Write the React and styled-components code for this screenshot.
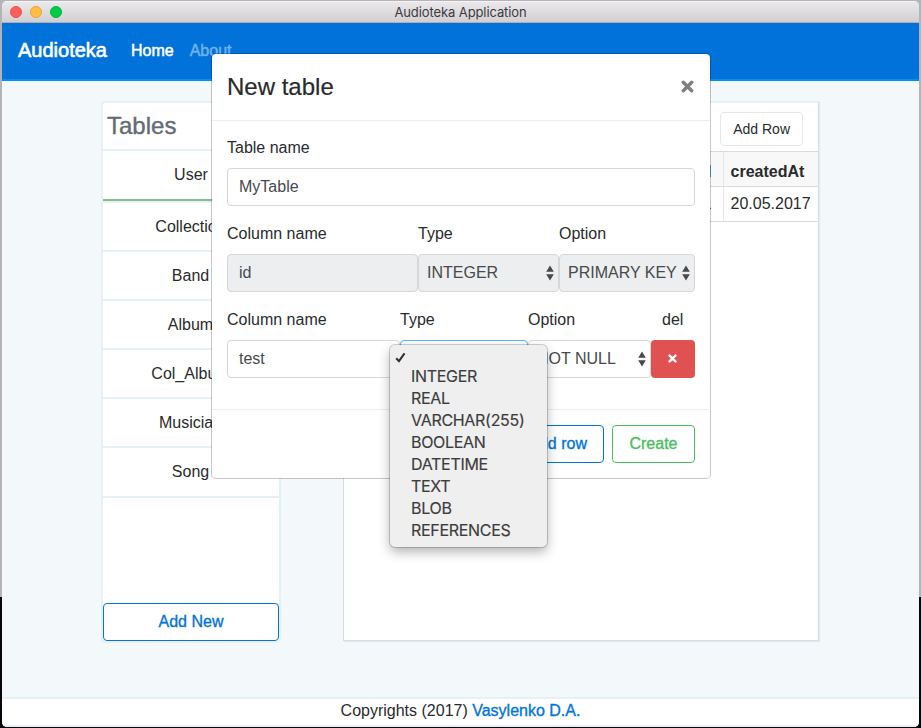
import React from "react";
import styled, { createGlobalStyle, css } from "styled-components";

const Global = createGlobalStyle`
  *, *::before, *::after { box-sizing: border-box; }
  html, body { margin: 0; padding: 0; overflow: hidden; }
  body {
    font-family: "Liberation Sans", Arial, sans-serif;
    font-size: 16px;
    line-height: 24px;
    color: #292b2c;
  }
  button { font: inherit; cursor: pointer; }
`;

const Desktop = styled.div`
  width: 921px;
  height: 728px;
  padding: 1px 2px;
  background: linear-gradient(#b4b4b6 0 597px, #08060c 597px);
`;

const Window = styled.div`
  position: relative;
  display: flex;
  flex-direction: column;
  width: 917px;
  height: 726px;
  border-radius: 5px;
  overflow: hidden;
  background: #f3f8fb;
`;

const TitleBar = styled.header`
  display: grid;
  grid-template-columns: 1fr auto 1fr;
  align-items: center;
  height: 22px;
  padding: 0 8px;
  background: linear-gradient(#ebe8eb, #d2cfd2);
  border-top: 1px solid #f5f3f5;
  border-bottom: 1px solid #b3aeb1;
`;

const Lights = styled.div`
  display: flex;
  gap: 8px;
`;

const Light = styled.span`
  width: 12px;
  height: 12px;
  border-radius: 50%;
  background: ${(p) => p.$fill};
  border: 1px solid ${(p) => p.$edge};
`;

const WindowTitle = styled.div`
  font: 13px/20px Inter, sans-serif;
  letter-spacing: -0.1px;
  color: #3c3a3c;
`;

const Navbar = styled.nav`
  display: flex;
  align-items: center;
  height: 58px;
  padding: 0 16px 2px;
  background: #0072d9;
  border-bottom: 2px solid #0090f8;
`;

const Brand = styled.a`
  margin-right: 24px;
  font-size: 20px;
  color: #fff;
  -webkit-text-stroke: 0.6px #fff;
`;

const NavLink = styled.a`
  margin-right: 16px;
  padding-top: 2px;
  color: ${(p) => (p.$active ? "#fff" : "#72b2ea")};
  -webkit-text-stroke: 0.5px currentColor;
`;

const Main = styled.main`
  display: flex;
  flex: 1;
  align-items: flex-start;
  gap: 62px;
  padding: 20px 0 0 99px;
`;

const Sidebar = styled.aside`
  display: flex;
  flex-direction: column;
  width: 180px;
  height: 542px;
  background: #fff;
  border: 2px solid #e5f1f4;
  border-radius: 4px;
`;

const SidebarTitle = styled.h2`
  height: 48px;
  margin: 0;
  padding: 0 4px;
  font-size: 24px;
  line-height: 46px;
  font-weight: 400;
  color: #636c76;
  -webkit-text-stroke: 0.4px currentColor;
  border-bottom: 2px solid #e5f1f4;
`;

const TableList = styled.ul`
  flex: 1;
  margin: 0;
  padding: 0;
  list-style: none;
`;

const TableItem = styled.li`
  height: ${(p) => (p.$active ? 52 : 49)}px;
  padding-right: 1px;
  line-height: 47px;
  text-align: center;
  border-bottom: 2px solid #e5f1f4;
  &:last-child {
    height: 50px;
  }
  ${(p) =>
    p.$active &&
    css`
      padding-right: 0;
      &::after {
        content: "";
        display: block;
        height: 2px;
        margin-top: 1px;
        background: #86bd8c;
      }
    `}
`;

const Button = styled.button`
  height: ${(p) => (p.$small ? 34 : 38)}px;
  padding: 0 ${(p) => (p.$small ? 12 : 16)}px;
  color: ${(p) => p.$tone};
  background: #fff;
  border: 1px solid ${(p) => p.$edge || p.$tone};
  border-radius: 4px;
  font-size: ${(p) => (p.$small ? 14 : 16)}px;
  -webkit-text-stroke: ${(p) => (p.$small ? 0 : 0.35)}px currentColor;
`;

const CreateButton = styled(Button)`
  width: 83px;
`;

const DataPanel = styled.section`
  width: 476px;
  height: 540px;
  background: #fff;
  border: 1px solid #d9dcde;
  border-top: 2px solid #e5f1f4;
  box-shadow: 1px 1px 1px #e0ebef;
  overflow: hidden;
`;

const DataToolbar = styled.div`
  display: flex;
  justify-content: flex-end;
  height: 48px;
  padding: 9px 15px 0;
`;

const DataTable = styled.table`
  width: 100%;
  border-collapse: collapse;
  table-layout: fixed;
`;

const Cell = styled.td`
  width: ${(p) => p.$width || "auto"};
  height: 35px;
  padding: 0 ${(p) => (p.$align === "right" ? 11 : 7)}px;
  text-align: ${(p) => p.$align || "left"};
  border-top: 1px solid #d9dadb;
  border-bottom: 1px solid #d9dadb;
  border-left: 1px solid #e3e5e6;
  ${(p) => p.$head && "padding-top: 5px; font-weight: 700; background: #f8f8f8;"}
`;

const Footer = styled.footer`
  height: 30px;
  text-align: center;
  background: #fff;
  border-top: 2px solid #e5f1f4;
  border-bottom: 2px solid #e5f1f4;
`;

const FooterLink = styled.a`
  color: #0275d8;
  -webkit-text-stroke: 0.35px currentColor;
`;

const Modal = styled.div`
  position: absolute;
  left: 209px;
  top: 52px;
  width: 500px;
  height: 426px;
  background: #fff;
  background-clip: padding-box;
  border: 1px solid rgba(0, 0, 0, 0.22);
  border-radius: 5px;
`;

const ModalHeader = styled.header`
  display: flex;
  justify-content: space-between;
  align-items: center;
  height: 67px;
  padding: 0 15px;
  border-bottom: 1px solid #eceeef;
`;

const ModalTitle = styled.h4`
  margin: 0;
  font-size: 24px;
  font-weight: 400;
  -webkit-text-stroke: 0.2px currentColor;
`;

const CloseButton = styled.button`
  display: flex;
  padding: 0 0 2px;
  margin-right: 1px;
  color: #808080;
  background: none;
  border: 0;
`;

const ModalBody = styled.div`
  height: 289px;
  padding: 15px;
  border-bottom: 1px solid #eceeef;
`;

const ModalFooter = styled.footer`
  display: flex;
  justify-content: flex-end;
  gap: 8px;
  padding: 15px;
`;

const FormRow = styled.div`
  display: grid;
  grid-template-columns: ${(p) => p.$columns};
  height: 86px;
`;

const Field = styled.div`
  min-width: 0;
`;

const Label = styled.label`
  display: block;
  height: 32px;
  padding-left: ${(p) => p.$inset || 0}px;
`;

const Control = styled.div`
  display: flex;
  align-items: center;
  justify-content: space-between;
  height: 38px;
  padding: 0 ${(p) => (p.$select ? "4px 1px 8px" : "11px 1px")};
  white-space: nowrap;
  color: #464a4c;
  background: ${(p) => (p.$disabled ? "#eceeef" : "#fff")};
  border: 1px solid ${(p) => (p.$focus ? "#5cb3fd" : "#d6d7d8")};
  border-radius: 4px;
`;

const DeleteButton = styled.button`
  display: flex;
  align-items: center;
  justify-content: center;
  width: 44px;
  height: 38px;
  padding: 0 1px 2px 0;
  color: #fff;
  background: #e05252;
  border: 0;
  border-radius: 4px;
`;

const Menu = styled.ul`
  position: absolute;
  left: 388px;
  top: 344px;
  width: 157px;
  height: 202px;
  margin: 0;
  padding: 2px 0 0;
  list-style: none;
  background: #efefef;
  border-radius: 5px;
  box-shadow: 0 0 0 1px rgba(0, 0, 0, 0.18), 0 5px 12px rgba(0, 0, 0, 0.3);
`;

const MenuItem = styled.li`
  display: flex;
  align-items: center;
  height: ${(p) => (p.$blank ? 18 : 22)}px;
  padding: ${(p) => (p.$blank ? "2px 0 0 5px" : "0 0 0 21px")};
  font: 16px/22px Inter, sans-serif;
  letter-spacing: -0.3px;
  color: #3c3c3c;
  -webkit-text-stroke: 0.15px currentColor;
`;

const Cross = ({ size }) => (
  <svg width={size} height={size} viewBox="0 0 12 12" aria-hidden="true">
    <path
      d="M2.1 2.1 9.9 9.9M9.9 2.1 2.1 9.9"
      stroke="currentColor"
      strokeWidth="3.2"
      strokeLinecap="round"
      fill="none"
    />
  </svg>
);

const Stepper = () => (
  <svg width="8" height="16" viewBox="0 0 8 16" aria-hidden="true">
    <path d="M4 .6 7.8 6.8H.2ZM4 15.4.2 9.2H7.8Z" fill="#464a4c" />
  </svg>
);

const Check = () => (
  <svg width="11" height="11" viewBox="0 0 11 11" aria-hidden="true">
    <path d="M1.2 6.2 4 9.2 9.5 1.4" stroke="#303030" strokeWidth="2" fill="none" />
  </svg>
);

const tables = ["User", "Collection", "Band", "Album", "Col_Album", "Musician", "Song"];
const types = ["INTEGER", "REAL", "VARCHAR(255)", "BOOLEAN", "DATETIME", "TEXT", "BLOB", "REFERENCES"];

function SelectBox({ children, ...rest }) {
  return (
    <Control $select {...rest}>
      <span>{children}</span>
      <Stepper />
    </Control>
  );
}

function NewTableModal() {
  return (
    <Modal role="dialog">
      <ModalHeader>
        <ModalTitle>New table</ModalTitle>
        <CloseButton aria-label="Close"><Cross size={13} /></CloseButton>
      </ModalHeader>
      <ModalBody>
        <FormRow $columns="1fr">
          <Field>
            <Label>Table name</Label>
            <Control>MyTable</Control>
          </Field>
        </FormRow>
        <FormRow $columns="191px 141px 136px">
          <Field>
            <Label>Column name</Label>
            <Control $disabled>id</Control>
          </Field>
          <Field>
            <Label>Type</Label>
            <SelectBox $disabled>INTEGER</SelectBox>
          </Field>
          <Field>
            <Label>Option</Label>
            <SelectBox $disabled>PRIMARY KEY</SelectBox>
          </Field>
        </FormRow>
        <FormRow $columns="173px 128px 123px 44px">
          <Field>
            <Label>Column name</Label>
            <Control>test</Control>
          </Field>
          <Field>
            <Label>Type</Label>
            <SelectBox $focus />
          </Field>
          <Field>
            <Label>Option</Label>
            <SelectBox>NOT NULL</SelectBox>
          </Field>
          <Field>
            <Label $inset={11}>del</Label>
            <DeleteButton aria-label="Delete"><Cross size={9} /></DeleteButton>
          </Field>
        </FormRow>
      </ModalBody>
      <ModalFooter>
        <Button $tone="#0275d8">Add row</Button>
        <CreateButton $tone="#4dbd62">Create</CreateButton>
      </ModalFooter>
    </Modal>
  );
}

export default function App() {
  return (
    <Desktop>
      <Global />
      <Window>
        <TitleBar>
          <Lights>
            <Light $fill="#ff5e5b" $edge="#e4504d" />
            <Light $fill="#ffbe41" $edge="#e2a63a" />
            <Light $fill="#00cc45" $edge="#08b140" />
          </Lights>
          <WindowTitle>Audioteka Application</WindowTitle>
        </TitleBar>
        <Navbar>
          <Brand>Audioteka</Brand>
          <NavLink $active>Home</NavLink>
          <NavLink>About</NavLink>
        </Navbar>
        <Main>
          <Sidebar>
            <SidebarTitle>Tables</SidebarTitle>
            <TableList>
              {tables.map((name, i) => (
                <TableItem key={name} $active={i === 0}>{name}</TableItem>
              ))}
            </TableList>
            <Button $tone="#0275d8">Add New</Button>
          </Sidebar>
          <DataPanel>
            <DataToolbar>
              <Button $small $tone="#292b2c" $edge="#e3e7ea">Add Row</Button>
            </DataToolbar>
            <DataTable>
              <tbody>
                <tr>
                  <Cell as="th" $head $align="right">id</Cell>
                  <Cell as="th" $head $width="95px">createdAt</Cell>
                </tr>
                <tr>
                  <Cell $align="right">1</Cell>
                  <Cell>20.05.2017</Cell>
                </tr>
              </tbody>
            </DataTable>
          </DataPanel>
        </Main>
        <Footer>
          Copyrights (2017) <FooterLink>Vasylenko D.A.</FooterLink>
        </Footer>
        <NewTableModal />
        <Menu>
          <MenuItem $blank><Check /></MenuItem>
          {types.map((type) => (
            <MenuItem key={type}>{type}</MenuItem>
          ))}
        </Menu>
      </Window>
    </Desktop>
  );
}
